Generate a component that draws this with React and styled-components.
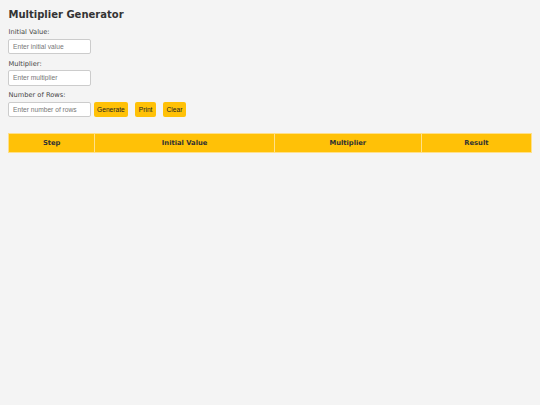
import React, { useState } from 'react';
import styled, { createGlobalStyle } from 'styled-components';

const GlobalStyle = createGlobalStyle`
    html, body {
        margin: 0;
        padding: 0;
        background: #f4f4f4;
    }
    body {
        font-family: "DejaVu Sans", Verdana, sans-serif;
        font-size: 6.67px;
        color: #333;
        min-height: 405px;
    }
`;

const Page = styled.div`
    padding: 8px;
`;

const Title = styled.h1`
    margin: 1px 0 8px 0.5px;
    font-size: 10px;
    font-weight: bold;
    line-height: normal;
    color: #333;
`;

const Group = styled.div`
    margin-bottom: 5.5px;
`;

const Label = styled.label`
    display: block;
    font-size: 6.67px;
    line-height: 8px;
    margin-bottom: 2.5px;
    margin-left: 0.5px;
    color: #444;
`;

const Row = styled.div`
    display: flex;
    align-items: center;
`;

const Input = styled.input`
    display: block;
    box-sizing: border-box;
    width: 82.5px;
    height: 15.5px;
    margin: 0;
    padding: 0 4px;
    font-family: "Liberation Sans", Arial, sans-serif;
    font-size: 6.67px;
    color: #333;
    background: #fff;
    border: 0.5px solid #ccc;
    border-radius: 2px;
    outline: none;

    &::placeholder {
        color: #777;
    }
`;

const Button = styled.button`
    box-sizing: border-box;
    height: 15.5px;
    margin-left: ${props => props.$gap || 7}px;
    padding: 0 3.5px;
    font-family: "Liberation Sans", Arial, sans-serif;
    font-size: 6.67px;
    color: #222;
    background: #ffc107;
    border: none;
    border-radius: 2px;
    cursor: pointer;
`;

const Table = styled.table`
    width: 100%;
    margin-top: 16px;
    border-collapse: collapse;
`;

const Th = styled.th`
    width: ${props => props.$width}px;
    height: 18px;
    padding: 0;
    font-size: 6.75px;
    font-weight: bold;
    color: #333;
    text-align: center;
    background: #ffc107;
    border: 0.5px solid #ffe08a;
`;

const columns = [
    { name: 'Step', width: 86 },
    { name: 'Initial Value', width: 180 },
    { name: 'Multiplier', width: 147 },
    { name: 'Result', width: 110 },
];

const App = () => {
    const [initial, setInitial] = useState('');
    const [multiplier, setMultiplier] = useState('');
    const [rows, setRows] = useState('');
    const [results, setResults] = useState([]);

    const generate = () => {
        const start = parseFloat(initial);
        const mult = parseFloat(multiplier);
        const count = parseInt(rows, 10);
        if (isNaN(start) || isNaN(mult) || isNaN(count)) return;
        const list = [];
        let value = start;
        for (let i = 1; i <= count; i++) {
            list.push({ step: i, value, mult, result: value * mult });
            value = value * mult;
        }
        setResults(list);
    };

    const clear = () => {
        setInitial('');
        setMultiplier('');
        setRows('');
        setResults([]);
    };

    return (
        <Page>
            <GlobalStyle />
            <Title>Multiplier Generator</Title>
            <Group>
                <Label>Initial Value:</Label>
                <Input
                    type="text"
                    inputMode="decimal"
                    placeholder="Enter initial value"
                    value={initial}
                    onChange={e => setInitial(e.target.value)}
                />
            </Group>
            <Group>
                <Label>Multiplier:</Label>
                <Input
                    type="text"
                    inputMode="decimal"
                    placeholder="Enter multiplier"
                    value={multiplier}
                    onChange={e => setMultiplier(e.target.value)}
                />
            </Group>
            <Group>
                <Label>Number of Rows:</Label>
                <Row>
                    <Input
                        type="text"
                        inputMode="numeric"
                        placeholder="Enter number of rows"
                        value={rows}
                        onChange={e => setRows(e.target.value)}
                    />
                    <Button $gap={3} onClick={generate}>Generate</Button>
                    <Button onClick={() => window.print()}>Print</Button>
                    <Button onClick={clear}>Clear</Button>
                </Row>
            </Group>
            <Table>
                <thead>
                    <tr>
                        {columns.map(col => (
                            <Th key={col.name} $width={col.width}>{col.name}</Th>
                        ))}
                    </tr>
                </thead>
                <tbody>
                    {results.map(r => (
                        <tr key={r.step}>
                            <td>{r.step}</td>
                            <td>{r.value}</td>
                            <td>{r.mult}</td>
                            <td>{r.result}</td>
                        </tr>
                    ))}
                </tbody>
            </Table>
        </Page>
    );
};

export default App;
